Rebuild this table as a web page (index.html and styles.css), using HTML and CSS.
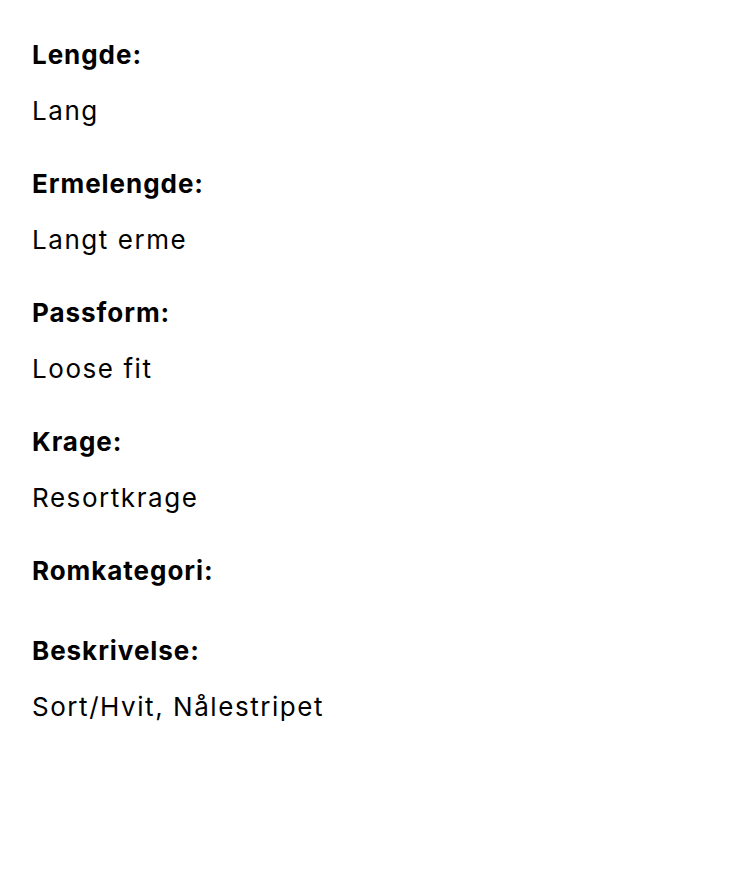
FILE: index.html
```html
<!DOCTYPE html>
<html lang="no">
<head>
<meta charset="utf-8">
<link rel="stylesheet" href="styles.css">
</head>
<body>
<dl class="specs">
  <div class="group"><dt class="label">Lengde:</dt><dd class="value">Lang</dd></div>
  <div class="group"><dt class="label">Ermelengde:</dt><dd class="value">Langt erme</dd></div>
  <div class="group"><dt class="label">Passform:</dt><dd class="value">Loose fit</dd></div>
  <div class="group"><dt class="label">Krage:</dt><dd class="value">Resortkrage</dd></div>
  <div class="group"><dt class="label">Romkategori:</dt><dd class="value"></dd></div>
  <div class="group"><dt class="label">Beskrivelse:</dt><dd class="value">Sort/Hvit, Nålestripet</dd></div>
</dl>
</body>
</html>
```
FILE: styles.css
```css
html, body {
  margin: 0;
  padding: 0;
  background: #fff;
}
body {
  font-family: Inter, "Liberation Sans", sans-serif;
  color: #000;
}
.specs {
  margin: 0;
  padding: 30px 32px;
  display: flex;
  flex-direction: column;
  gap: 24px;
}
.group {
  display: flex;
  flex-direction: column;
  gap: 7px;
}
.label {
  font-size: 26px;
  font-weight: 700;
  line-height: 49px;
  letter-spacing: 0.95px;
  margin: 0;
}
.value {
  font-size: 26px;
  font-weight: 400;
  line-height: 49px;
  letter-spacing: 1.55px;
  margin: 0;
}
.value:empty {
  height: 0;
}
```
